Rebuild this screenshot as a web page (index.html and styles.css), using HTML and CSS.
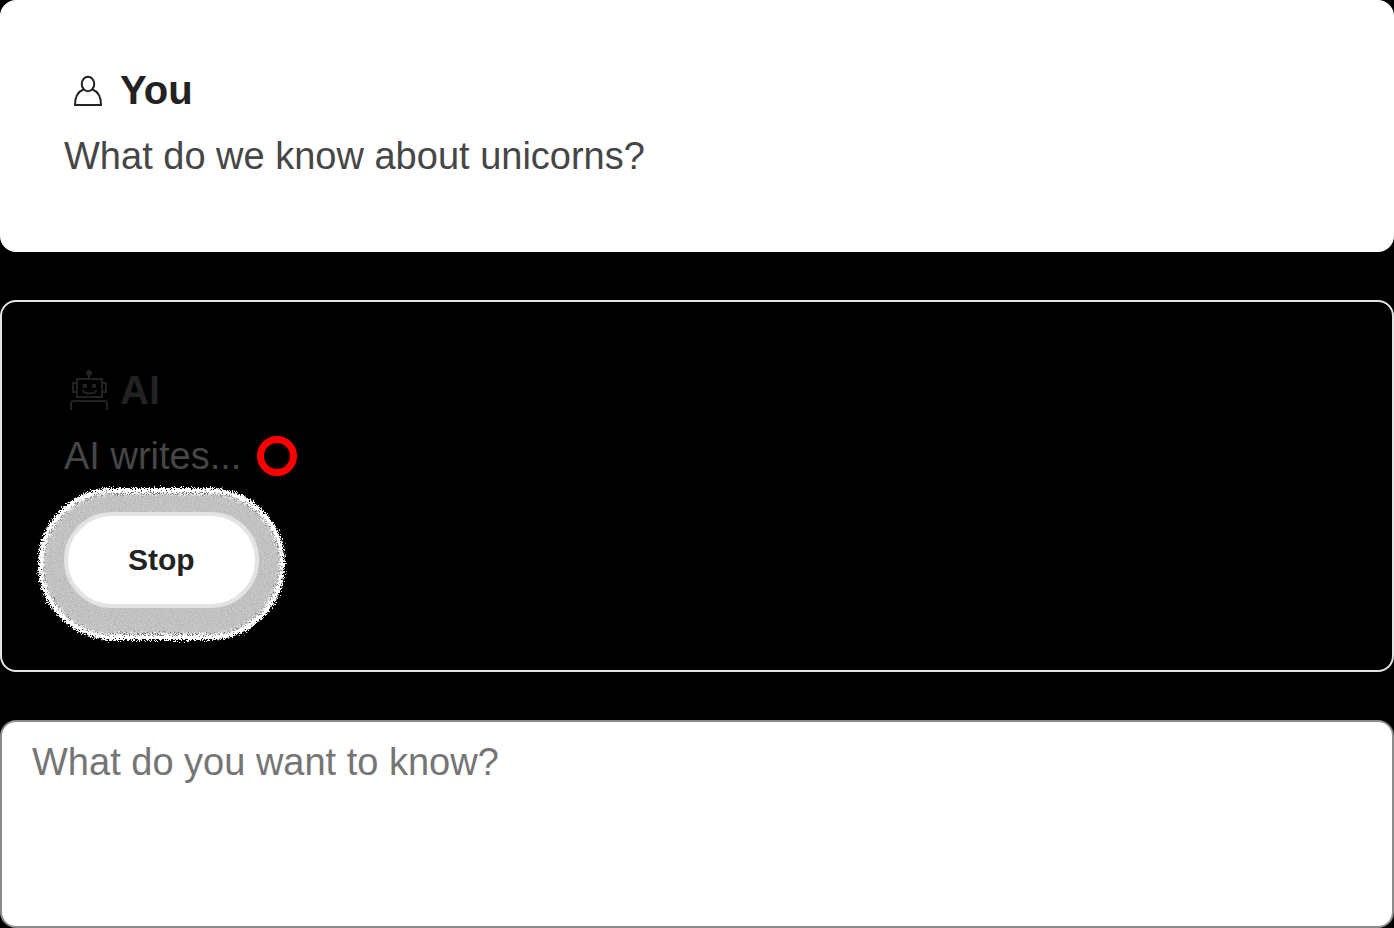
FILE: index.html
```html
<!DOCTYPE html>
<html lang="en">
<head>
<meta charset="utf-8">
<meta name="viewport" content="width=device-width, initial-scale=1">
<title>Chat</title>
<link rel="stylesheet" href="styles.css">
</head>
<body>
<main class="chat">
  <article class="message message-user">
    <h2 class="author">
      <svg class="icon" viewBox="0 0 48 48" aria-hidden="true">
        <ellipse cx="24" cy="18" rx="6.200" ry="7.200"/>
        <path d="M19.500 23.500C14 25.500 11 31 11 39H37C37 31 34 25.500 28.500 23.500"/>
      </svg>
      You
    </h2>
    <p class="text">What do we know about unicorns?</p>
  </article>
  <article class="message message-ai">
    <h2 class="author">
      <svg class="icon" viewBox="0 0 48 48" aria-hidden="true">
        <circle cx="25" cy="7" r="3" class="solid"/>
        <path d="M25 9V13M13 13H38V31H13ZM12 17H9V26H12M39 17H42V26H39M7 44V38Q7 35 10 35H40Q43 35 43 38V44"/>
        <path d="M19 18H23V22H19ZM28 18H32V22H28Z" class="solid"/>
        <path d="M18.500 24Q20 27.500 25.500 27.500T32.500 24"/>
      </svg>
      AI
    </h2>
    <p class="text status">AI writes... <span class="spinner" role="status" aria-label="Loading"></span></p>
    <button class="stop" type="button">Stop</button>
  </article>
  <textarea class="prompt" aria-label="Question" placeholder="What do you want to know?"></textarea>
</main>
<svg class="defs" aria-hidden="true">
  <filter id="grain" x="-10%" y="-10%" width="120%" height="120%" color-interpolation-filters="sRGB">
    <feTurbulence type="fractalNoise" baseFrequency="0.9" numOctaves="2" seed="4" result="noise"/>
    <feDisplacementMap in="SourceGraphic" in2="noise" scale="10" xChannelSelector="R" yChannelSelector="G" result="rough"/>
    <feColorMatrix in="noise" values="1 0 0 0 0  1 0 0 0 0  1 0 0 0 0  0 0 0 0 1" result="speckle"/>
    <feComposite in="rough" in2="speckle" operator="arithmetic" k1="0.3" k2="0.87" k3="0" k4="0"/>
  </filter>
</svg>
</body>
</html>
```
FILE: styles.css
```css
* { box-sizing: border-box; }

body {
  margin: 0;
  background: #000;
  color: #464646;
  font-family: "Liberation Sans", Arial, sans-serif;
  font-size: 38px;
  line-height: 48px;
}

.chat {
  display: flex;
  flex-direction: column;
  gap: 48px;
  min-height: 100vh;
}

.message {
  padding: 62px;
  border: 2px solid #e3e3e3;
  border-radius: 16px;
}

.message-user {
  background: #fff;
  border-color: #fff;
}

.author {
  display: flex;
  align-items: center;
  gap: 8px;
  margin: 0 0 16px;
  color: #222;
  font-size: 40px;
  line-height: 52px;
}

.icon {
  width: 48px;
  height: 48px;
  fill: none;
  stroke: currentColor;
  stroke-width: 2;
}

.solid {
  fill: currentColor;
  stroke: none;
}

.text { margin: 0 0 8px; }

.status {
  display: flex;
  align-items: center;
  gap: 16px;
  margin-bottom: 32px;
}

.spinner {
  width: 40px;
  height: 40px;
  border: 7px solid #f00;
  border-radius: 50%;
}

.stop {
  position: relative;
  isolation: isolate;
  display: block;
  height: 96px;
  padding: 0 64px;
  border: 0;
  background: none;
  color: #222;
  font: bold 30px/36px "Liberation Sans", Arial, sans-serif;
}

.stop::before {
  content: "";
  position: absolute;
  z-index: -1;
  inset: 0;
  border: 4px solid #e3e3e3;
  border-radius: 48px;
  background: #fff;
}

/* Grainy halo around the button */
.stop::after {
  content: "";
  position: absolute;
  z-index: -2;
  inset: -24px -26px -32px;
  border: 5px solid #fff;
  border-radius: 76px;
  background: #bebebe;
  box-shadow: inset 0 0 0 1px #777, inset 0 0 0 2px #ddd;
  filter: url(#grain);
}

.prompt {
  display: block;
  flex: 1;
  width: 100%;
  min-height: 208px;
  padding: 16px 30px;
  border: 2px solid #8c8c8c;
  border-radius: 16px;
  outline: none;
  resize: none;
  background: #fff;
  color: #464646;
  font: inherit;
}

.prompt::placeholder { color: #757575; }

.defs {
  position: absolute;
  width: 0;
  height: 0;
}
```
